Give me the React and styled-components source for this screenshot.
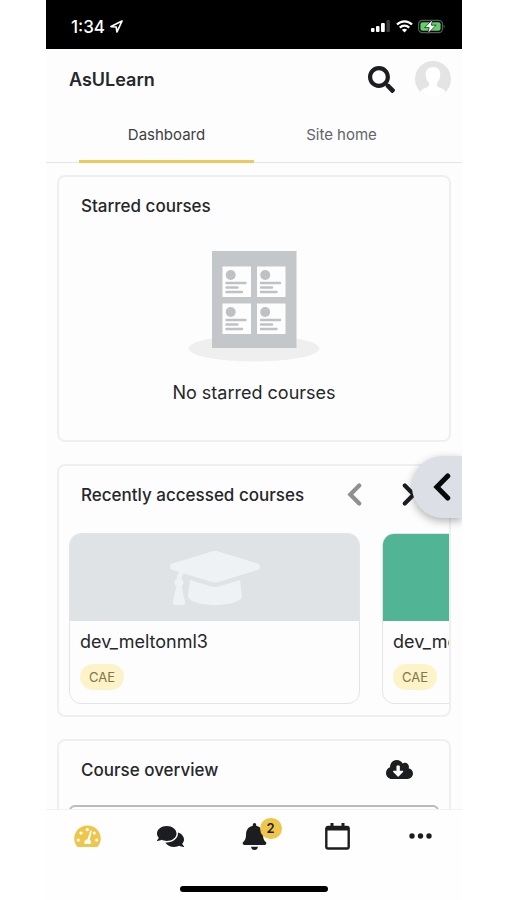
import React from "react"
import styled, { createGlobalStyle } from "styled-components"
import { FaSearch, FaComments, FaBell, FaCloudDownloadAlt, FaGraduationCap } from "react-icons/fa"

const GlobalStyle = createGlobalStyle`
	* {
		box-sizing: border-box;
	}
	body {
		margin: 0;
		background: #ffffff;
		color: #25272a;
		font-family: Inter, "Liberation Sans", sans-serif;
	}
	button {
		border: none;
		padding: 0;
		background: none;
		font: inherit;
		color: inherit;
		cursor: pointer;
	}
	svg {
		display: block;
	}
`
const Phone = styled.div`
	position: relative;
	display: flex;
	flex-direction: column;
	height: 100vh;
	margin: 0 45px 0 46px;
	background: #fdfdfd;
	overflow: hidden;
`
const StatusBar = styled.div`
	flex: none;
	display: flex;
	align-items: center;
	justify-content: space-between;
	height: 49px;
	padding: 4px 16px 0 25px;
	background: #000000;
	color: #ffffff;
	font-size: 17px;
	font-weight: 500;
`
const StatusGroup = styled.div`
	display: flex;
	align-items: center;
	gap: ${props => props.$gap}px;
`
const Header = styled.header`
	flex: none;
	display: flex;
	align-items: center;
	height: 60px;
	padding: 0 11px 0 23px;
`
const SiteName = styled.h1`
	flex: 1;
	margin: 0;
	font-size: 18px;
	font-weight: 600;
`
const SearchButton = styled.button`
	margin-right: 20px;
	color: #1b1d20;
	font-size: 27px;
`
const Avatar = styled.button`
	width: 36px;
	height: 36px;
	border-radius: 50%;
	overflow: hidden;
`
const Tabs = styled.nav`
	flex: none;
	display: flex;
	height: 54px;
	padding: 0 33px;
	border-bottom: 1px solid #e4e5e7;
`
const Tab = styled.a`
	flex: 1;
	display: flex;
	align-items: center;
	justify-content: center;
	margin-bottom: -1px;
	border-bottom: 3px solid ${props => (props.$active ? "#eccb5c" : "transparent")};
	color: ${props => (props.$active ? "#3d4043" : "#626568")};
	font-size: 15px;
	text-decoration: none;
`
const Content = styled.main`
	flex: 1;
	min-height: 0;
	display: flex;
	flex-direction: column;
	gap: 22px;
	padding: 12px 11px 0;
	overflow: hidden;
`
const Card = styled.section`
	flex: none;
	border: 2px solid #eeeff0;
	border-radius: 8px;
	overflow: hidden;
`
const CardHeader = styled.div`
	display: flex;
	align-items: center;
	height: 57px;
	padding: 0 32px 0 22px;
`
const CardTitle = styled.h2`
	flex: 1;
	margin: 0;
	font-size: 17px;
	font-weight: 500;
	white-space: nowrap;
`
const Empty = styled.div`
	display: flex;
	flex-direction: column;
	align-items: center;
	gap: 18px;
	padding: 17px 0 34px;
	p {
		margin: 0;
		font-size: 18px;
		line-height: 26px;
	}
`
const Arrow = styled.button`
	margin-left: 40px;
	color: ${props => (props.disabled ? "#8f9092" : "#1b1d20")};
`
const DownloadButton = styled.button`
	margin-right: 4px;
	color: #1b1d20;
	font-size: 27px;
`
const Slides = styled.div`
	display: flex;
	gap: 22px;
	padding: 10px 0 11px 10px;
	overflow: hidden;
`
const Course = styled.article`
	flex: 0 0 calc(100% - 89px);
	border: 1px solid #e2e4e7;
	border-radius: 12px;
	overflow: hidden;
`
const Cover = styled.div`
	display: flex;
	align-items: center;
	justify-content: center;
	height: 87px;
	background: ${props => props.$color};
	color: #eff2f5;
	font-size: 90px;
`
const CourseBody = styled.div`
	display: flex;
	flex-direction: column;
	align-items: flex-start;
	gap: 9px;
	padding: 8px 10px 13px;
`
const CourseName = styled.a`
	color: inherit;
	font-size: 18px;
	line-height: 26px;
	text-decoration: none;
`
const Tag = styled.span`
	padding: 0 9px;
	border-radius: 13px;
	background: #fcf3c8;
	color: #807648;
	font-size: 13px;
	line-height: 26px;
`
const Filter = styled.div`
	height: 50px;
	margin: 7px 10px 0;
	border: 2px solid #b9bbbe;
	border-radius: 6px;
`
const Drawer = styled.button`
	position: absolute;
	top: 456px;
	right: 0;
	width: 50px;
	height: 62px;
	padding-left: 21px;
	border-radius: 31px 0 0 31px;
	background: #dcdfe5;
	color: #08090a;
	box-shadow: 0 3px 9px rgba(0, 0, 0, 0.3);
`
const BottomBar = styled.footer`
	flex: none;
	border-top: 1px solid #f0f1f2;
	background: #fefefe;
`
const BottomNav = styled.nav`
	display: flex;
	height: 52px;
`
const NavItem = styled.a`
	flex: 1;
	display: flex;
	align-items: center;
	justify-content: center;
	color: ${props => (props.$active ? "#efc64c" : "#1b1d20")};
	font-size: 27px;
`
const BellWrap = styled.span`
	position: relative;
`
const Badge = styled.span`
	position: absolute;
	top: -5px;
	left: 19px;
	width: 22px;
	height: 21px;
	border-radius: 11px;
	background: #efc64c;
	color: #1b1d20;
	font-size: 13px;
	font-weight: 600;
	line-height: 21px;
	text-align: center;
`
const HomeIndicator = styled.div`
	width: 148px;
	height: 6px;
	margin: 24px auto 8px;
	border-radius: 3px;
	background: #000000;
`

const LocationIcon = () => (
	<svg width="13" height="13" viewBox="0 0 13 13" fill="none" stroke="#fff" strokeWidth="1.7" strokeLinejoin="round">
		<path d="M12 1 L1 6.6 L6.2 7 L7 12 Z" />
	</svg>
)

const SignalIcon = () => (
	<svg width="20" height="13" viewBox="0 0 20 13" fill="#fff">
		<rect x="0" y="8" width="3.5" height="4" rx="1" />
		<rect x="5" y="6" width="3.5" height="6" rx="1" />
		<rect x="10" y="3" width="3.8" height="9" rx="1" />
		<rect x="15.4" y="0" width="3.5" height="12" rx="1" fill="#3a3a3a" />
	</svg>
)

const WifiIcon = () => (
	<svg width="17" height="13" viewBox="0 0 17 13" fill="none" stroke="#fff" strokeWidth="2.2">
		<path d="M1 4.6 C5.2 .3 11.8 .3 16 4.6" />
		<path d="M3.8 7.6 C6.5 5 10.5 5 13.2 7.6" />
		<path d="M8.5 12.4 L5.9 9.8 C7.4 8.4 9.6 8.4 11.1 9.8 Z" fill="#fff" stroke="none" />
	</svg>
)

const BatteryIcon = () => (
	<svg width="28" height="15" viewBox="0 0 28 15">
		<rect x=".6" y="1.4" width="23.8" height="12.2" rx="3.6" fill="none" stroke="#565c57" strokeWidth="1.2" />
		<rect x="2.4" y="3.2" width="20.2" height="8.6" rx="2" fill="#5fd06a" />
		<path d="M25.6 5.5 Q28 7.5 25.6 9.5Z" fill="#565c57" />
		<path d="M14.7 .4 L6.6 8.6 H11.2 L9.6 14.7 L18.2 6.2 H13.3Z" fill="#fff" stroke="#123016" strokeWidth=".8" />
	</svg>
)

const AvatarIcon = () => (
	<svg width="36" height="36" viewBox="0 0 36 36">
		<rect width="36" height="36" fill="#e4e4e5" />
		<path d="M18 6 C23.5 6 26 10 25.2 15 C24.8 18.3 23.3 20.8 21.7 22.3 C21.7 26 23.8 26.3 27 27.5 C30.5 29 31 31.5 31.5 36 H4.5 C5 31.5 5.5 29 9 27.5 C12.2 26.3 14.3 26 14.3 22.3 C12.7 20.8 11.2 18.3 10.8 15 C10 10 12.5 6 18 6Z" fill="#fff" />
	</svg>
)

const ChevronIcon = ({ width, height, right }) => (
	<svg
		width={width}
		height={height}
		viewBox="0 0 14 22"
		fill="none"
		stroke="currentColor"
		strokeWidth="4"
		strokeLinecap="round"
		strokeLinejoin="miter"
	>
		<path d={right ? "M2.5 2.4 L11 11 L2.5 19.6" : "M11.5 2.4 L3 11 L11.5 19.6"} />
	</svg>
)

const EmptyIcon = () => (
	<svg width="132" height="111" viewBox="0 0 132 111">
		<ellipse cx="66" cy="97.5" rx="65.5" ry="13" fill="#efefef" />
		<rect x="24" y="0" width="84.5" height="97" fill="#c4c7ca" />
		{[[34.5, 15.5], [69, 15.5], [34.5, 52.5], [69, 52.5]].map(([x, y]) => (
			<g key={`${x}-${y}`} transform={`translate(${x} ${y})`}>
				<rect width="28.5" height="30.5" fill="#fdfdfd" />
				<circle cx="8.2" cy="8.5" r="5" fill="#bfc2c5" />
				<path d="M4 16.5H23 M4 21H15 M4 25.5H19.5" stroke="#bfc2c5" strokeWidth="2.4" strokeLinecap="round" />
			</g>
		))}
	</svg>
)

const GaugeIcon = () => (
	<svg width="27" height="22" viewBox="0 0 27 22">
		<path d="M3.1 21.5 C1.4 19.4 .2 16.5 .2 13.6 C.2 6.2 6.1 .4 13.5 .4 S26.8 6.2 26.8 13.6 C26.8 16.5 25.6 19.4 23.9 21.5 Q23.5 22 22.8 22 H4.2 Q3.5 22 3.1 21.5Z" fill="currentColor" />
		<g fill="#fefefe">
			<circle cx="4.3" cy="15" r="1.6" />
			<circle cx="7" cy="8" r="1.6" />
			<circle cx="13.3" cy="4.7" r="1.6" />
			<circle cx="20.3" cy="8" r="1.6" />
			<circle cx="22.7" cy="15" r="1.6" />
			<path d="M16.4 5.4 L17.8 5.8 L15.8 14.7 C17.3 15.8 17.6 17.6 16.4 19.1 H10.8 C9.6 17 10.9 14.7 13.5 14.3Z" />
		</g>
	</svg>
)

const CalendarIcon = () => (
	<svg width="25" height="28" viewBox="0 0 25 28">
		<rect x="1.3" y="5" width="22.4" height="21.5" rx="1.8" fill="none" stroke="currentColor" strokeWidth="2.4" />
		<path d="M1.2 4.5H23.8V8.5H1.2Z" fill="currentColor" />
		<path d="M7 1V6 M18 1V6" stroke="currentColor" strokeWidth="3" />
	</svg>
)

const MoreIcon = () => (
	<svg width="23" height="6" viewBox="0 0 23 6" fill="currentColor">
		<circle cx="3" cy="3" r="2.7" />
		<circle cx="11.5" cy="3" r="2.7" />
		<circle cx="20" cy="3" r="2.7" />
	</svg>
)

const courses = [
	{ id: 1, name: "dev_meltonml3", category: "CAE", color: "#dfe3e6", icon: true },
	{ id: 2, name: "dev_meltonml3", category: "CAE", color: "#51b495" }
]

const CourseCard = ({ course: { name, category, color, icon } }) => {
	return (
		<Course>
			<Cover $color={color}>{icon && <FaGraduationCap />}</Cover>
			<CourseBody>
				<CourseName href="#course">{name}</CourseName>
				<Tag>{category}</Tag>
			</CourseBody>
		</Course>
	)
}

const App = () => {
	return (
		<>
			<GlobalStyle />
			<Phone>
				<StatusBar>
					<StatusGroup $gap={5}>
						<span>1:34</span>
						<LocationIcon />
					</StatusGroup>
					<StatusGroup $gap={5}>
						<SignalIcon />
						<WifiIcon />
						<BatteryIcon />
					</StatusGroup>
				</StatusBar>
				<Header>
					<SiteName>AsULearn</SiteName>
					<SearchButton aria-label="Search">
						<FaSearch />
					</SearchButton>
					<Avatar aria-label="Account">
						<AvatarIcon />
					</Avatar>
				</Header>
				<Tabs>
					<Tab href="#dashboard" $active>
						Dashboard
					</Tab>
					<Tab href="#home">Site home</Tab>
				</Tabs>
				<Content>
					<Card>
						<CardHeader>
							<CardTitle>Starred courses</CardTitle>
						</CardHeader>
						<Empty>
							<EmptyIcon />
							<p>No starred courses</p>
						</Empty>
					</Card>
					<Card>
						<CardHeader>
							<CardTitle>Recently accessed courses</CardTitle>
							<Arrow aria-label="Previous" disabled>
								<ChevronIcon width={15} height={23} />
							</Arrow>
							<Arrow aria-label="Next">
								<ChevronIcon width={15} height={23} right />
							</Arrow>
						</CardHeader>
						<Slides>
							{courses.map(course => (
								<CourseCard key={course.id} course={course} />
							))}
						</Slides>
					</Card>
					<Card>
						<CardHeader>
							<CardTitle>Course overview</CardTitle>
							<DownloadButton aria-label="Download courses">
								<FaCloudDownloadAlt />
							</DownloadButton>
						</CardHeader>
						<Filter />
					</Card>
				</Content>
				<BottomBar>
					<BottomNav>
						<NavItem href="#dashboard" aria-label="Dashboard" $active>
							<GaugeIcon />
						</NavItem>
						<NavItem href="#messages" aria-label="Messages">
							<FaComments />
						</NavItem>
						<NavItem href="#notifications" aria-label="Notifications">
							<BellWrap>
								<FaBell />
								<Badge>2</Badge>
							</BellWrap>
						</NavItem>
						<NavItem href="#calendar" aria-label="Calendar">
							<CalendarIcon />
						</NavItem>
						<NavItem href="#more" aria-label="More">
							<MoreIcon />
						</NavItem>
					</BottomNav>
					<HomeIndicator />
				</BottomBar>
				<Drawer aria-label="Open blocks">
					<ChevronIcon width={18} height={28} />
				</Drawer>
			</Phone>
		</>
	)
}

export default App
